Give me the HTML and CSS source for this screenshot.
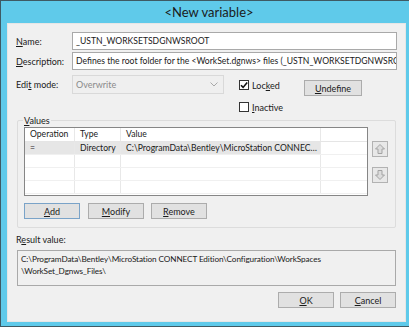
FILE: index.html
```html
<!DOCTYPE html>
<html lang="en">
<head>
    <meta charset="UTF-8">
    <title>New variable</title>
    <link rel="stylesheet" href="styles.css">
</head>
<body>
    <div class="window">
        <div class="titlebar">&lt;New variable&gt;</div>

        <div class="client">
            <!-- Name / description -->
            <div class="form-row">
                <label class="label"><u>N</u>ame:</label>
                <div class="field">_USTN_WORKSETSDGNWSROOT</div>
            </div>
            <div class="form-row">
                <label class="label"><u>D</u>escription:</label>
                <div class="field">Defines the root folder for the &lt;WorkSet.dgnws&gt; files (_USTN_WORKSETDGNWSROOT)</div>
            </div>

            <!-- Edit mode + flags -->
            <div class="edit-row">
                <label class="label">Edi<u>t</u> mode:</label>
                <div class="select">
                    <span>Overwrite</span>
                    <svg width="8" height="5" viewBox="0 0 8 5"><path d="M0.5 0.5 L4 4 L7.5 0.5" fill="none" stroke="#a8a8a8" stroke-width="1"/></svg>
                </div>
                <div class="checks">
                    <div class="check-item">
                        <span class="box">
                            <svg width="8" height="8" viewBox="0 0 8 8"><path d="M1 4.2 L3.1 6.4 L7.2 1.4" fill="none" stroke="#111" stroke-width="1.6"/></svg>
                        </span>
                        <span>Loc<u>k</u>ed</span>
                    </div>
                    <div class="check-item">
                        <span class="box"></span>
                        <span><u>I</u>nactive</span>
                    </div>
                </div>
                <button class="btn btn-undefine"><u>U</u>ndefine</button>
            </div>

            <!-- Values group -->
            <div class="group">
                <span class="group-title"><u>V</u>alues</span>
                <div class="list-area">
                    <div class="listview">
                        <div class="lv-row lv-head">
                            <div class="cell c-op">Operation</div>
                            <div class="cell c-type">Type</div>
                            <div class="cell c-val">Value</div>
                            <div class="cell c-rest"></div>
                        </div>
                        <div class="lv-row selected">
                            <div class="cell c-op">=</div>
                            <div class="cell c-type">Directory</div>
                            <div class="cell c-val">C:\ProgramData\Bentley\MicroStation CONNECT Edition\Configuration\</div>
                            <div class="cell c-rest"></div>
                        </div>
                        <div class="lv-row">
                            <div class="cell c-op"></div><div class="cell c-type"></div><div class="cell c-val"></div><div class="cell c-rest"></div>
                        </div>
                        <div class="lv-row">
                            <div class="cell c-op"></div><div class="cell c-type"></div><div class="cell c-val"></div><div class="cell c-rest"></div>
                        </div>
                        <div class="lv-row">
                            <div class="cell c-op"></div><div class="cell c-type"></div><div class="cell c-val"></div><div class="cell c-rest"></div>
                        </div>
                    </div>
                    <div class="arrows">
                        <button class="arrow-btn">
                            <svg width="12" height="12" viewBox="0 0 12 12"><path d="M6 1.5 L10.5 6 L8 6 L8 10.5 L4 10.5 L4 6 L1.5 6 Z" fill="#dcdcdc" stroke="#a3a3a3" stroke-width="1"/></svg>
                        </button>
                        <button class="arrow-btn">
                            <svg width="12" height="12" viewBox="0 0 12 12"><path d="M6 10.5 L10.5 6 L8 6 L8 1.5 L4 1.5 L4 6 L1.5 6 Z" fill="#dcdcdc" stroke="#a3a3a3" stroke-width="1"/></svg>
                        </button>
                    </div>
                </div>
                <div class="group-buttons">
                    <button class="btn btn-focus"><u>A</u>dd</button>
                    <button class="btn"><u>M</u>odify</button>
                    <button class="btn"><u>R</u>emove</button>
                </div>
            </div>

            <!-- Result -->
            <div class="result-label">R<u>e</u>sult value:</div>
            <div class="result-box">
                <div>C:\ProgramData\Bentley\MicroStation CONNECT Edition\Configuration\WorkSpaces</div>
                <div>\WorkSet_Dgnws_Files\</div>
            </div>

            <div class="footer-buttons">
                <button class="btn btn-ok"><u>O</u>K</button>
                <button class="btn btn-cancel"><u>C</u>ancel</button>
            </div>
        </div>
    </div>
</body>
</html>
```

FILE: styles.css
```css
/* dialog styles */
* {
    box-sizing: border-box;
}
body {
    margin: 0;
    padding: 0;
    font-family: 'Lato', 'Liberation Sans', sans-serif;
    font-size: 9px;
    color: #1a1a1a;
    background-color: #5fcaea;
}
u {
    text-decoration: underline;
    text-underline-offset: 1px;
}
.window {
    width: 409px;
    height: 327px;
    background-color: #5fcaea;
    border-top: 1px solid #3e5a64;
    border-left: 1px solid #3e5a64;
    border-bottom: 1px solid #3e5a64;
    display: flex;
    flex-direction: column;
}
.titlebar {
    height: 22px;
    display: flex;
    align-items: center;
    justify-content: center;
    padding-left: 8px;
    font-size: 13px;
    color: #1b1b1b;
}
.client {
    flex: 1;
    margin: 0 3px 4px 6px;
    background-color: #f0f0f0;
    border: 1px solid #e6e6e6;
    padding: 8px 8px 0 8px;
}
.form-row {
    display: flex;
    align-items: center;
    margin-bottom: 2px;
}
.label {
    width: 56px;
    flex-shrink: 0;
}
.field {
    flex: 1;
    height: 18px;
    background-color: #fff;
    border: 1px solid #a9a9a9;
    padding: 0 3px;
    font-size: 8.6px;
    line-height: 16px;
    white-space: nowrap;
    overflow: hidden;
}
.edit-row {
    display: flex;
    align-items: flex-start;
    margin-top: 5px;
}
.edit-row .label {
    line-height: 19px;
}
.select {
    width: 152px;
    height: 19px;
    border: 1px solid #d9d9d9;
    background-color: #efefef;
    color: #8a8a8a;
    display: flex;
    align-items: center;
    justify-content: space-between;
    padding: 0 5px 0 3px;
}
.checks {
    margin-left: 15px;
    margin-top: 5px;
    width: 65px;
    display: flex;
    flex-direction: column;
    gap: 12px;
}
.check-item {
    display: flex;
    align-items: center;
    gap: 3px;
    height: 10px;
}
.box {
    width: 10px;
    height: 10px;
    border: 1px solid #333;
    background-color: #fff;
    display: flex;
    align-items: center;
    justify-content: center;
}
.btn {
    height: 16px;
    width: 56px;
    padding: 0;
    font-family: inherit;
    font-size: 9px;
    color: #1a1a1a;
    background-color: #e1e1e1;
    border: 1px solid #acacac;
}
.btn-undefine {
    width: 58px;
    margin-top: 5px;
}
.btn-focus {
    border-color: #7aa3c8;
}
.group {
    position: relative;
    margin: 8px 1px 0 1px;
    height: 108px;
    border: 1px solid #dcdcdc;
    border-radius: 2px;
    padding: 6px 0 0 6px;
}
.group-title {
    position: absolute;
    top: -6px;
    left: 5px;
    padding: 0 1px;
    background-color: #f0f0f0;
}
.list-area {
    display: flex;
    align-items: flex-start;
}
.listview {
    width: 344px;
    height: 69px;
    background-color: #fff;
    border: 1px solid #868686;
    overflow: hidden;
}
.lv-row {
    display: flex;
    height: 13px;
    border-bottom: 1px solid #f0f0f0;
}
.lv-head {
    height: 14px;
    border-bottom: 1px solid #e5e5e5;
}
.cell {
    padding-left: 5px;
    font-size: 8.6px;
    line-height: 12px;
    border-right: 1px solid #e8e8e8;
    white-space: nowrap;
    overflow: hidden;
    text-overflow: ellipsis;
}
.c-op {
    width: 50px;
}
.c-type {
    width: 46px;
}
.c-val {
    width: 200px;
}
.c-rest {
    flex: 1;
    border-right: none;
}
.selected .c-op,
.selected .c-type,
.selected .c-val {
    background-color: #e6e6e6;
}
.arrows {
    margin-left: 4px;
    margin-top: 14px;
    display: flex;
    flex-direction: column;
    gap: 10px;
}
.arrow-btn {
    width: 16px;
    height: 16px;
    padding: 0;
    border: 1px solid #b2b2b2;
    background-color: #e8e8e8;
    display: flex;
    align-items: center;
    justify-content: center;
}
.group-buttons {
    display: flex;
    margin-top: 7px;
    gap: 8px;
}
.group-buttons .btn + .btn + .btn {
    margin-left: -1px;
}
.result-label {
    margin-top: 5px;
    height: 13px;
    line-height: 13px;
}
.result-box {
    margin: 4px 1px 0 1px;
    height: 36px;
    border: 1px solid #a9a9a9;
    background-color: #f0f0f0;
    padding: 2px 3px;
    font-size: 8.2px;
    letter-spacing: -0.1px;
    line-height: 12px;
    white-space: nowrap;
    overflow: hidden;
}
.footer-buttons {
    display: flex;
    justify-content: flex-end;
    gap: 6px;
    margin-top: 6px;
    padding-right: 1px;
}
```
